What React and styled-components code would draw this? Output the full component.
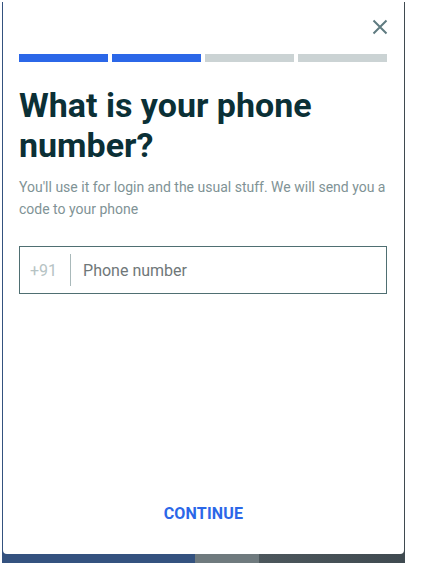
import { createGlobalStyle, styled } from 'styled-components'

const GlobalStyle = createGlobalStyle`
  html, body {
    margin: 0;
    padding: 0;
    background: #ffffff;
  }
  body {
    font-family: Roboto, "Liberation Sans", sans-serif;
  }
`

const steps = [true, true, false, false]

const App = () => {
  return (
    <Page>
      <GlobalStyle />
      <Backdrop>
        <Modal>
          <TopBar>
            <CloseButton aria-label="close">
              <svg width="16" height="16" viewBox="0 0 16 16">
                <path
                  d="M1.5 1.5 L14.5 14.5 M14.5 1.5 L1.5 14.5"
                  stroke="#5f7b80"
                  strokeWidth="2"
                  fill="none"
                />
              </svg>
            </CloseButton>
          </TopBar>

          <Progress>
            {steps.map((done, i) => (
              <Step key={i} $done={done} />
            ))}
          </Progress>

          <Title>What is your phone number?</Title>
          <Subtitle>
            You'll use it for login and the usual stuff. We will send you a
            code to your phone
          </Subtitle>

          <Field>
            <Prefix>+91</Prefix>
            <Divider />
            <Input placeholder="Phone number" />
          </Field>

          <Footer>
            <ContinueButton>CONTINUE</ContinueButton>
          </Footer>
        </Modal>
      </Backdrop>
    </Page>
  )
}

const Page = styled.div`
  padding: 2px 0 0 2px;
  width: 423px;
  height: 565px;
  box-sizing: border-box;
`

const Backdrop = styled.div`
  width: 403px;
  height: 561px;
  padding: 0 1px 9px 1px;
  box-sizing: border-box;
  background: linear-gradient(
    to right,
    #34527f 0,
    #34527f 193px,
    #6f7a7e 193px,
    #6f7a7e 257px,
    #4c575c 257px,
    #3f4a50 100%
  );
`

const Modal = styled.div`
  display: flex;
  flex-direction: column;
  height: 100%;
  background: #ffffff;
  border-radius: 0 0 4px 4px;
  padding: 0 16px 0 16px;
  box-sizing: border-box;
`

const TopBar = styled.div`
  display: flex;
  justify-content: flex-end;
  padding-top: 15px;
  height: 35px;
  box-sizing: border-box;
`

const CloseButton = styled.button`
  width: 20px;
  height: 20px;
  padding: 0;
  margin-right: -2px;
  border: none;
  background: none;
  display: flex;
  align-items: center;
  justify-content: center;
`

const Progress = styled.div`
  display: grid;
  grid-template-columns: repeat(4, 89px);
  gap: 4px;
  margin-top: 17px;
`

const Step = styled.div`
  height: 8px;
  background: ${(p) => (p.$done ? '#2b67e8' : '#cbd3d4')};
`

const Title = styled.h1`
  margin: 23px 0 0;
  font-size: 34px;
  line-height: 40px;
  font-weight: 700;
  color: #0b3036;
  letter-spacing: 0;
`

const Subtitle = styled.p`
  margin: 11px 0 0;
  font-size: 14px;
  line-height: 22px;
  color: #7f9396;
`

const Field = styled.div`
  display: flex;
  align-items: center;
  width: 368px;
  height: 48px;
  margin-top: 26px;
  border: 1px solid #4f6f72;
  box-sizing: border-box;
`

const Prefix = styled.span`
  padding: 0 13px 0 10px;
  font-size: 16px;
  color: #b6c3c4;
`

const Divider = styled.div`
  width: 1px;
  height: 32px;
  background: #a9b9ba;
`

const Input = styled.input`
  flex: 1;
  border: none;
  outline: none;
  padding: 0 12px;
  font-family: Roboto, "Liberation Sans", sans-serif;
  font-size: 16px;
  color: #333;
  background: transparent;

  &::placeholder {
    color: #6f7779;
  }
`

const Footer = styled.div`
  margin-top: auto;
  display: flex;
  justify-content: center;
  padding-bottom: 31px;
`

const ContinueButton = styled.button`
  border: none;
  background: none;
  padding: 0;
  font-family: Roboto, "Liberation Sans", sans-serif;
  font-size: 16px;
  font-weight: 700;
  color: #2b67e8;
  letter-spacing: 0.2px;
`

export default App
